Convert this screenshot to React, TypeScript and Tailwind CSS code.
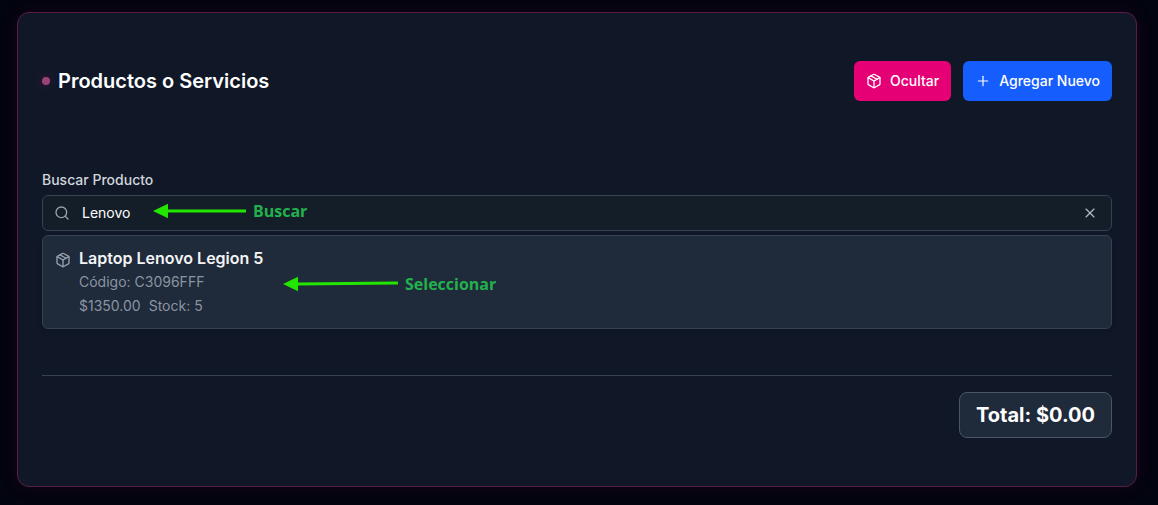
import { useState } from "react";
import { Package, Plus, Search, X } from "lucide-react";

const product = {
  name: "Laptop Lenovo Legion 5",
  code: "C3096FFF",
  price: "$1350.00",
  stock: 5,
};

function Header() {
  return (
    <header className="flex items-center justify-between">
      <h2 className="flex items-center gap-2 text-xl font-semibold text-white">
        <span className="size-2 rounded-full bg-[#984377] shadow-[0_0_10px_rgba(230,0,118,0.3)]" />
        Productos o Servicios
      </h2>
      <div className="flex gap-3 text-sm font-medium text-white">
        <button type="button" className="flex h-10 items-center gap-2 rounded-md bg-[#e60076] px-3">
          <Package className="size-4" />
          Ocultar
        </button>
        <button type="button" className="flex h-10 items-center gap-2 rounded-md bg-[#155dfc] px-3">
          <Plus className="size-4" strokeWidth={1.75} />
          Agregar Nuevo
        </button>
      </div>
    </header>
  );
}

function SearchNote() {
  return (
    <div className="pointer-events-none absolute top-[5px] left-[110px] flex items-center gap-[7px]">
      <svg width="93" height="16" viewBox="0 0 93 16" aria-hidden="true">
        <path d="M0 8 15 .7v14.6Z" fill="#22e600" />
        <path d="M14 8H93" stroke="#22e600" strokeWidth="3" />
      </svg>
      <span className="font-['Open_Sans',sans-serif] text-base leading-5 font-bold text-[#22b14c]">Buscar</span>
    </div>
  );
}

function SelectNote() {
  return (
    <div className="pointer-events-none absolute top-[38px] left-[240px] flex items-center gap-[7px]">
      <svg width="115" height="16" viewBox="0 0 115 16" aria-hidden="true">
        <path d="M0 8 15 .7v14.6Z" fill="#22e600" />
        <path d="M14 8 115 7" stroke="#22e600" strokeWidth="3" />
      </svg>
      <span className="font-['Open_Sans',sans-serif] text-base leading-5 font-bold text-[#22b14c]">Seleccionar</span>
    </div>
  );
}

function ProductSearch() {
  const [query, setQuery] = useState("Lenovo");
  return (
    <section className="mt-[70px]">
      <label htmlFor="product" className="block text-sm leading-[18px] font-medium text-[#d1d5dc]">
        Buscar Producto
      </label>
      <div className="relative mt-1.5 flex h-9 items-center rounded-md border border-[#364153] bg-[#141e29] pr-3 pl-[11px]">
        <Search className="size-4 shrink-0 text-[#99a1af]" />
        <input
          id="product"
          type="text"
          value={query}
          onChange={(event) => setQuery(event.target.value)}
          className="min-w-0 flex-1 bg-transparent px-3 text-sm text-white outline-none"
        />
        <button type="button" aria-label="Limpiar" onClick={() => setQuery("")} className="px-px text-[#b4bac4]">
          <X className="size-4" strokeWidth={1.75} />
        </button>
        <SearchNote />
      </div>
      <button
        type="button"
        className="relative mt-1 flex w-full gap-2 rounded-md border border-[#364153] bg-[#1f2a3a] px-3 py-2.5 text-left shadow-md"
      >
        <Package className="mt-1.5 size-4 shrink-0 text-[#99a1af]" />
        <span className="flex flex-col text-sm leading-6 text-[#8b94a3]">
          <span className="text-base leading-6 font-semibold text-[#f3f4f6]">{product.name}</span>
          <span>Código: {product.code}</span>
          <span className="flex gap-2">
            <span>{product.price}</span>
            <span>Stock: {product.stock}</span>
          </span>
        </span>
        <SelectNote />
      </button>
    </section>
  );
}

export default function App() {
  return (
    <div className="min-h-screen bg-[#02040f] pt-3 pr-[21px] pb-[18px] pl-[17px] font-[Inter,sans-serif]">
      <main className="rounded-xl border border-[#581c48] bg-[#101827] px-6 py-12 shadow-[0_0_20px_rgba(230,0,118,0.09)]">
        <Header />
        <ProductSearch />
        <footer className="mt-[46px] flex justify-end border-t border-[#364153] pt-4">
          <p className="rounded-lg border border-[#4a5565] bg-[#1f2a3a] px-4 py-2 text-xl font-bold text-white">
            Total: $0.00
          </p>
        </footer>
      </main>
    </div>
  );
}
